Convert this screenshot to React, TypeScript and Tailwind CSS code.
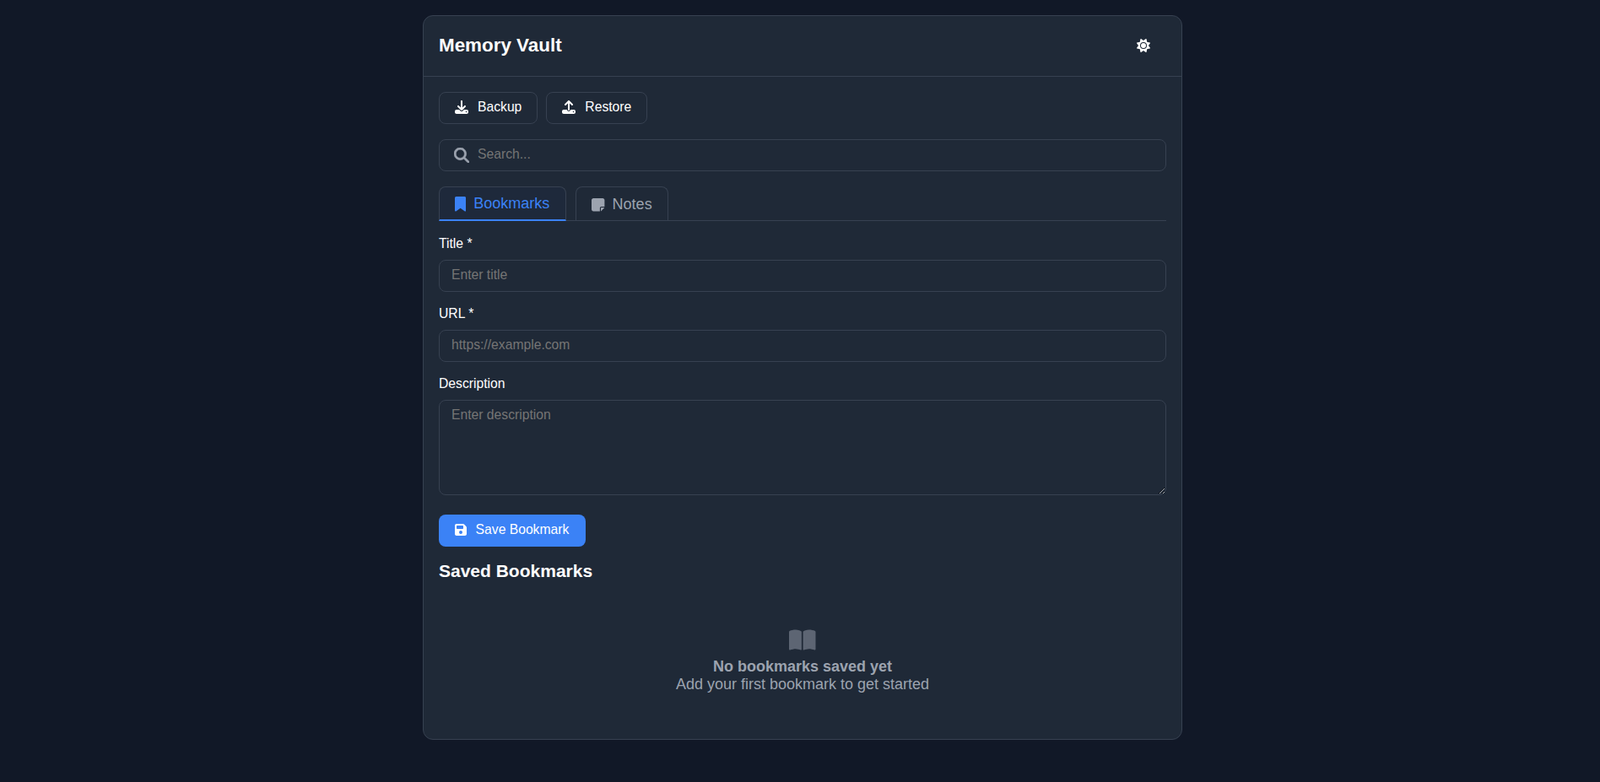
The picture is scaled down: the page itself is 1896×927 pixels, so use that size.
import { FaBookOpen, FaBookmark, FaDownload, FaFloppyDisk, FaMagnifyingGlass, FaNoteSticky, FaSun, FaUpload } from "react-icons/fa6";

const inputClass =
  "block w-full h-[38px] rounded-lg border border-[#374151] bg-[#1f2937] px-[14px] pb-[2px] text-[15.7px] text-white outline-none placeholder:text-[#757575]";
const labelClass = "block mb-[10px] text-[15.7px] leading-[18px] text-white";
const outlineButton =
  "flex h-[38px] items-center gap-[11px] rounded-lg border border-[#374151] px-[18px] pb-[2px] text-[15.7px]";

export default function App() {
  return (
    <div className="min-h-screen bg-[#111827] pl-[6px] pt-[18px] font-['Liberation_Sans',Arial,sans-serif] text-white">
      <div className="mx-auto h-[859px] w-[900px] rounded-xl border border-[#374151] bg-[#1f2937]">
        <header className="flex h-[72px] items-center justify-between border-b border-[#374151] px-[18px] pb-[2px]">
          <h1 className="text-[22.4px] font-bold">Memory Vault</h1>
          <button className="mr-[19px] text-white">
            <FaSun size={16} />
          </button>
        </header>

        <div className="flex flex-col p-[18px]">
          <div className="flex gap-[10px]">
            <button className={outlineButton}>
              <FaDownload size={16} />
              Backup
            </button>
            <button className={outlineButton}>
              <FaUpload size={16} />
              Restore
            </button>
          </div>

          <div className="relative mt-[18px]">
            <FaMagnifyingGlass size={18} className="absolute left-[17.5px] top-[10px] stroke-[16] text-[#9ca3af]" />
            <input className={inputClass + " pl-[45px]"} placeholder="Search..." />
          </div>

          <div className="mt-[18px] flex gap-[11px] border-b border-[#374151]">
            <button className="-mb-px flex h-[41px] items-center gap-[9px] rounded-t-lg border border-b-2 border-[#374151] border-b-[#3b82f6] bg-[#1e293b] pl-[18px] pr-[19px] text-lg text-[#3b82f6]">
              <FaBookmark className="mt-[2px] h-[17.6px] w-[13.2px]" />
              Bookmarks
            </button>
            <button className="flex h-[40px] items-center gap-[9px] rounded-t-lg border border-b-0 border-[#374151] pl-[18px] pr-[18px] text-lg text-[#9ca3af]">
              <FaNoteSticky className="mt-[2px] h-[17.6px] w-[15.4px]" />
              Notes
            </button>
          </div>

          <div className="mt-[18px]">
            <label className={labelClass}>Title *</label>
            <input className={inputClass} placeholder="Enter title" />
          </div>
          <div className="mt-[17px]">
            <label className={labelClass}>URL *</label>
            <input className={inputClass} placeholder="https://example.com" />
          </div>
          <div className="mt-[17px]">
            <label className={labelClass}>Description</label>
            <textarea
              className="block h-[113px] w-full rounded-lg border border-[#374151] bg-[#1f2937] px-[14px] pb-[8px] pt-[5px] text-[15.7px] text-white outline-none placeholder:text-[#757575]"
              placeholder="Enter description"
            />
          </div>

          <button className="mt-[23px] flex h-[38px] w-[174px] items-center gap-[10.6px] rounded-lg bg-[#3b82f6] pb-[2px] pl-[19px] pr-[18px] text-[15.7px]">
            <FaFloppyDisk className="h-[16px] w-[14px]" />
            Save Bookmark
          </button>

          <h2 className="mt-[15px] text-[21px] font-bold leading-[27px]">Saved Bookmarks</h2>

          <div className="mt-[53px] flex flex-col items-center text-[#9ca3af]">
            <FaBookOpen size={31.5} className="text-[#5d6573]" />
            <p className="mt-[5px] text-lg font-bold leading-[20px]">No bookmarks saved yet</p>
            <p className="text-lg leading-[22px]">Add your first bookmark to get started</p>
          </div>
        </div>
      </div>
    </div>
  );
}
